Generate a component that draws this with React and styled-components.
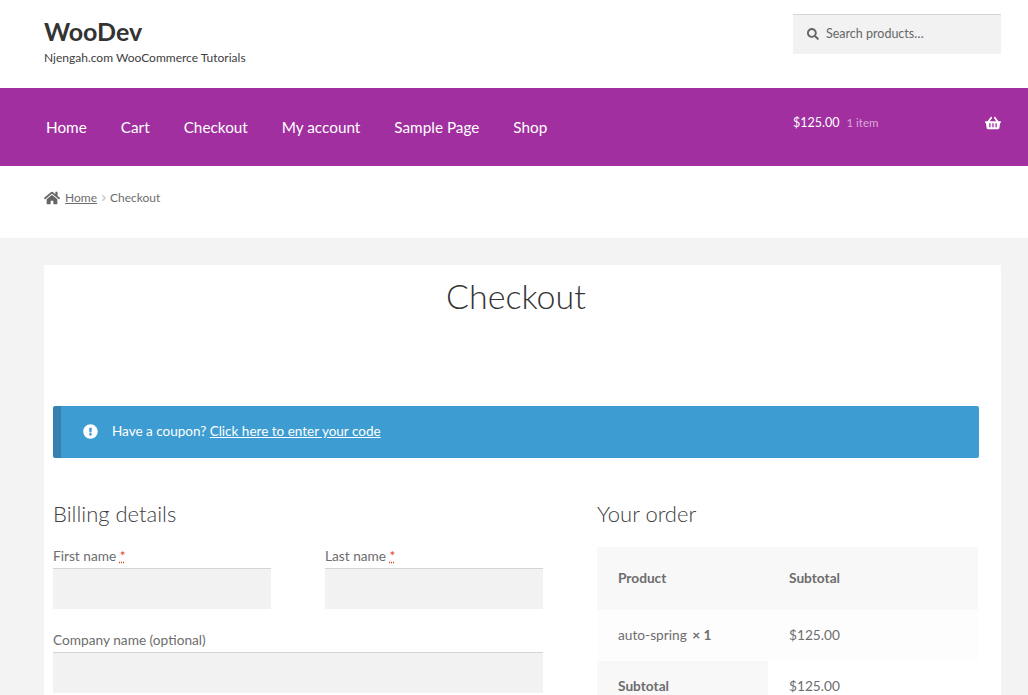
import React from 'react';
import styled, { createGlobalStyle } from 'styled-components';
import { FaHome, FaSearch, FaShoppingBasket, FaExclamationCircle, FaAngleRight } from 'react-icons/fa';

const GlobalStyle = createGlobalStyle`
html, body {
  margin: 0;
  padding: 0;
  height: 100%;
  overflow: hidden;
  background: #f3f3f3;
  font-family: Lato, "Open Sans", sans-serif;
  color: #6d6d6d;
}
`

const menuItems = ['Home', 'Cart', 'Checkout', 'My account', 'Sample Page', 'Shop'];

const App = () => {
  return <React.Fragment>
    <GlobalStyle />
    <Masthead>
      <Branding>
        <SiteTitle>WooDev</SiteTitle>
        <Tagline>Njengah.com WooCommerce Tutorials</Tagline>
      </Branding>
      <SearchBox>
        <FaSearch size={12} color="#666" />
        <span>Search products…</span>
      </SearchBox>
    </Masthead>
    <NavBar>
      <Menu>
        {menuItems.map((item) => {
          return <MenuItem key={item}>{item}</MenuItem>
        })}
      </Menu>
      <MiniCart>
        <Price>$125.00</Price>
        <Count>1 item</Count>
        <BasketSlot><FaShoppingBasket size={16} color="#fff" /></BasketSlot>
      </MiniCart>
    </NavBar>
    <Breadcrumbs>
      <FaHome size={16} color="#666" />
      <CrumbLink>Home</CrumbLink>
      <FaAngleRight size={10} color="#ccc" />
      <span>Checkout</span>
    </Breadcrumbs>
    <Main>
      <PageTitle>Checkout</PageTitle>
      <Notice>
        <FaExclamationCircle size={15} color="#fff" />
        <span>Have a coupon? <NoticeLink>Click here to enter your code</NoticeLink></span>
      </Notice>
      <Columns>
        <Billing>
          <SectionTitle>Billing details</SectionTitle>
          <NameRow>
            <Field>
              <Label>First name <Required>*</Required></Label>
              <Input />
            </Field>
            <Field>
              <Label>Last name <Required>*</Required></Label>
              <Input />
            </Field>
          </NameRow>
          <Field>
            <Label>Company name (optional)</Label>
            <Input />
          </Field>
        </Billing>
        <Order>
          <SectionTitle>Your order</SectionTitle>
          <OrderTable>
            <thead>
              <tr>
                <HeadCell $first>Product</HeadCell>
                <HeadCell>Subtotal</HeadCell>
              </tr>
            </thead>
            <tbody>
              <tr>
                <BodyCell $tinted>auto-spring <Qty>× 1</Qty></BodyCell>
                <BodyCell $tinted>$125.00</BodyCell>
              </tr>
              <tr>
                <FootLabel>Subtotal</FootLabel>
                <BodyCell>$125.00</BodyCell>
              </tr>
            </tbody>
          </OrderTable>
        </Order>
      </Columns>
    </Main>
  </React.Fragment>
};

export default App;

const Masthead = styled.header`
height: 88px;
box-sizing: border-box;
background: #fff;
display: flex;
justify-content: space-between;
padding: 14px 27px 0 44px;
`
const Branding = styled.div`
display: flex;
flex-direction: column;
`
const SiteTitle = styled.div`
font-size: 25px;
font-weight: 700;
line-height: 34px;
color: #333;
`
const Tagline = styled.div`
font-size: 12px;
line-height: 18px;
margin-top: 1px;
color: #404040;
`
const SearchBox = styled.div`
width: 208px;
height: 40px;
box-sizing: border-box;
background: #f2f2f2;
border-top: 1px solid #d6d6d6;
display: flex;
align-items: center;
gap: 7px;
padding: 0 0 2px 14px;
font-size: 12.5px;
color: #666;
`
const NavBar = styled.nav`
height: 78px;
background: #a12fa0;
display: flex;
justify-content: space-between;
align-items: center;
padding: 0 27px 0 46px;
`
const Menu = styled.div`
display: flex;
gap: 34px;
`
const MenuItem = styled.a`
color: #fff;
font-size: 15.3px;
`
const MiniCart = styled.div`
width: 208px;
display: flex;
align-items: baseline;
color: #fff;
margin-top: -9px;
`
const Price = styled.span`
font-size: 12.5px;
`
const Count = styled.span`
font-size: 11.5px;
margin-left: 7px;
color: #d9a8d8;
`
const BasketSlot = styled.span`
margin-left: auto;
display: flex;
align-self: center;
`
const Breadcrumbs = styled.div`
height: 72px;
box-sizing: border-box;
background: #fff;
display: flex;
align-items: center;
padding: 0 0 9px 44px;
font-size: 12px;
color: #6d6d6d;
& > svg:first-child {
  margin-right: 5px;
}
& > svg:nth-of-type(2) {
  margin: 0 1px 0 2px;
}
`
const CrumbLink = styled.a`
text-decoration: underline;
`
const Main = styled.main`
margin: 27px 27px 0 44px;
background: #fff;
padding: 0 22px 0 9px;
`
const PageTitle = styled.h1`
margin: 0;
padding-top: 7px;
height: 141px;
box-sizing: border-box;
text-align: center;
font-size: 34px;
font-weight: 300;
line-height: 47px;
color: #333;
`
const Notice = styled.div`
height: 52px;
box-sizing: border-box;
background: #3d9cd2;
border-left: 8px solid #3581b0;
border-radius: 2px;
display: flex;
align-items: center;
gap: 14px;
padding: 0 0 2px 22px;
font-size: 13.5px;
color: #fff;
`
const NoticeLink = styled.a`
text-decoration: underline;
`
const Columns = styled.div`
display: flex;
gap: 54px;
margin-top: 41px;
`
const Billing = styled.div`
width: 490px;
`
const Order = styled.div`
width: 381px;
`
const SectionTitle = styled.h3`
margin: 0 0 17px;
font-size: 22px;
font-weight: 300;
line-height: 30px;
color: #404040;
`
const NameRow = styled.div`
display: grid;
grid-template-columns: 218px 218px;
justify-content: space-between;
margin-bottom: 21px;
`
const Field = styled.div`
display: flex;
flex-direction: column;
`
const Label = styled.label`
font-size: 13.7px;
line-height: 20px;
padding-bottom: 2px;
color: #6d6d6d;
`
const Required = styled.abbr`
color: #e2401c;
text-decoration: underline dotted;
`
const Input = styled.div`
height: 41px;
box-sizing: border-box;
background: #f2f2f2;
border-top: 1px solid #d4d4d4;
`
const OrderTable = styled.table`
width: 100%;
margin-top: 18px;
border-collapse: collapse;
font-size: 13.7px;
color: #6d6d6d;
`
const HeadCell = styled.th`
box-sizing: border-box;
height: 63px;
padding: 0 0 2px 21px;
background: #f8f8f8;
text-align: left;
font-weight: 700;
width: ${props => props.$first ? '171px' : 'auto'};
`
const BodyCell = styled.td`
box-sizing: border-box;
height: 51px;
padding: 0 0 2px 21px;
background: ${props => props.$tinted ? '#fdfdfd' : '#fff'};
`
const Qty = styled.strong`
margin-left: 2px;
font-weight: 700;
`
const FootLabel = styled.th`
box-sizing: border-box;
height: 51px;
padding: 0 0 2px 21px;
background: #f8f8f8;
text-align: left;
font-weight: 700;
`
